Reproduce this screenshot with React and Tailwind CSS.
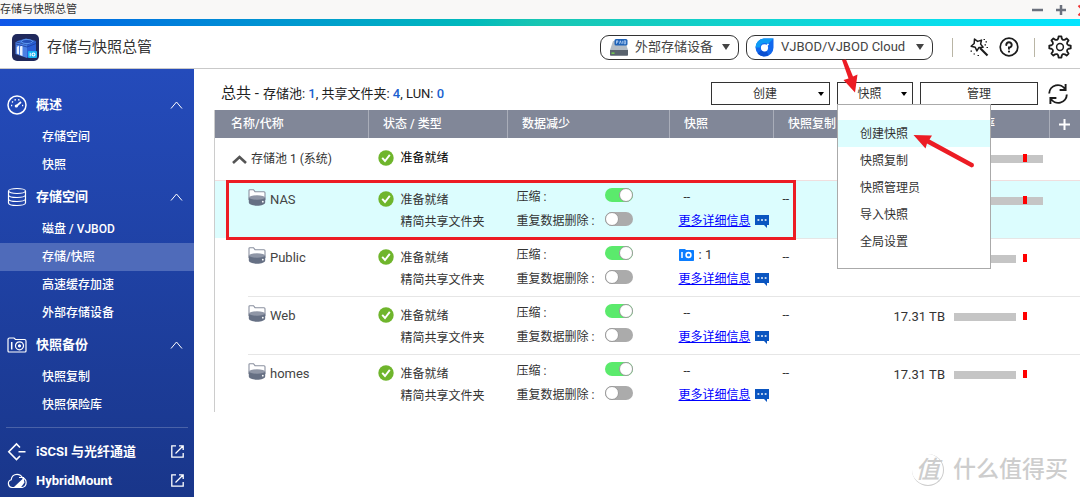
import React from "react";

function AppLogo() {
  return (
    <svg className="size-[27px] shrink-0" viewBox="0 0 27 27" aria-hidden="true">
      <rect width="27" height="27" rx="5" fill="#20295c" />
      <path d="M4 7.500 14 4.500l10 2.500-9 4z" fill="#3b74dc" />
      <ellipse cx="15" cy="7.500" rx="5.500" ry="2" fill="#2450b8" stroke="#6aa5f5" strokeWidth="0.8" />
      <path d="M3.500 8 15 11v13L3.500 20z" fill="#4a80e4" />
      <path d="M4.800 13 7 11.500v9l-2.200-1zM8 12.500l2.500-1V22L8 21z" fill="#e6f0ff" />
      <path d="M15 11l9-4v11l-9 6z" fill="#2a5fd6" />
      <path d="M4 10l11 3M15 13l9-3.500" stroke="#1c3f9e" strokeWidth="0.800" />
      <rect x="16" y="17" width="9" height="7" rx="1" fill="#14b4f5" />
      <path d="M18.200 18.800v3.500" stroke="#fff" strokeWidth="1" />
      <circle cx="21.500" cy="20.500" r="1.500" fill="none" stroke="#fff" strokeWidth="1.100" />
    </svg>
  );
}

function DiskIcon() {
  return (
    <svg className="h-[17px] w-[20px]" viewBox="0 0 20 17" aria-hidden="true">
      <path d="M4 2h12l3 9H1z" fill="#b3bcc5" />
      <path d="M1 11h18v5a.8.8 0 0 1-.8.8H1.800A.8.8 0 0 1 1 16z" fill="#59636e" />
      <rect x="2.500" y="13.500" width="3" height="1.300" fill="#7be04c" />
      <rect x="5.500" y="0" width="13" height="6.500" rx="1.500" fill="#1f63b8" />
      <path d="M7.500 4.800v-3h1.300v1.400H7.600M10.400 4.800l1-3 1 3M13.700 1.800v3M15.200 1.800v3h1.400v-3z" fill="none" stroke="#cfe4ff" strokeWidth="0.700" />
    </svg>
  );
}

function CloudDropIcon() {
  return (
    <svg className="size-[19px]" viewBox="0 0 19 19" aria-hidden="true">
      <path d="M18.500.5v8.700a9 9 0 1 1-9-8.700z" fill="#1268ee" />
      <path d="M9 .5h9.500l-5.800 5.800A4.500 4.500 0 0 0 5 9.500H.5A9 9 0 0 1 9 .5z" fill="#0f9cf5" />
      <path d="M2.500 15.500l4-3.200a4.500 4.500 0 0 0 5 1l2 3.800a9 9 0 0 1-11-1.600z" fill="#0a4fd0" />
      <circle cx="9.500" cy="9.800" r="3.600" fill="#fff" />
      <path d="M9.500 9.800 13.500 6" stroke="#fff" strokeWidth="1.500" />
    </svg>
  );
}

function WandIcon() {
  return (
    <svg className="size-[20px]" viewBox="0 0 20 20" fill="none" stroke="#1c1c1c" strokeWidth="1.500" strokeLinejoin="round" aria-hidden="true">
      <path d="M5.500 2 8.600 4.400l3.900-1.300-.9 4 2.500 3.100-4.100.2-2.100 3.500-1.700-3.700-4.100-1 3.100-2.700z" />
      <path d="M11 11l7.500 7.500" strokeWidth="2.100" />
      <path d="M14.500 2.500H16M16.500 4.800H18M15.500 7.800H17M17.500 10.500H19M1.500 14.200H3M4.500 17H6M8.500 18.500H10" strokeWidth="1.200" />
    </svg>
  );
}

function HelpIcon() {
  return (
    <svg className="size-[20px]" viewBox="0 0 20 20" fill="none" stroke="#1c1c1c" strokeWidth="1.700" strokeLinecap="round" aria-hidden="true">
      <circle cx="10" cy="10" r="8.800" />
      <path d="M7.300 8A2.700 2.700 0 1 1 10 10.600v1.200" strokeWidth="2" />
      <circle cx="10" cy="14.600" r="0.500" fill="#1c1c1c" strokeWidth="1.200" />
    </svg>
  );
}

const gearPath = (() => {
  const teeth = 8;
  const at = (angle, r) => (12 + r * Math.cos(angle)).toFixed(2) + " " + (12 + r * Math.sin(angle)).toFixed(2);
  let d = "";
  for (let i = 0; i < teeth; i++) {
    const a = (i * 2 * Math.PI) / teeth - Math.PI / 2;
    const next = a + Math.PI / teeth;
    d += (i === 0 ? "M" : "L") + at(a - 0.2, 8.8);
    d += "L" + at(a - 0.13, 10.8) + "L" + at(a + 0.13, 10.8) + "L" + at(a + 0.2, 8.8);
    d += "Q" + at(next, 6.9) + " " + at(next + Math.PI / teeth - 0.2, 8.8);
  }
  return d + "Z";
})();

function GearIcon() {
  return (
    <svg className="size-[24px]" viewBox="0 0 24 24" fill="none" stroke="#1c1c1c" strokeWidth="1.800" strokeLinejoin="round" aria-hidden="true">
      <path d={gearPath} />
      <circle cx="12" cy="12" r="3.400" strokeWidth="1.500" />
    </svg>
  );
}

function RefreshIcon() {
  return (
    <svg className="size-[22px]" viewBox="0 0 22 22" fill="none" stroke="#1c1c1c" strokeWidth="1.900" aria-hidden="true">
      <path d="M2.200 10.500A8.600 8.600 0 0 1 18.300 6.500M18.600 1v6h-6" />
      <path d="M19.800 11.500A8.600 8.600 0 0 1 3.700 15.500M3.400 21v-6h6" />
    </svg>
  );
}

function Caret({ small }) {
  return small ? (
    <span className="h-0 w-0 border-x-3 border-t-4 border-x-transparent border-t-black" />
  ) : (
    <span className="h-0 w-0 border-x-4 border-t-6 border-x-transparent border-t-[#444]" />
  );
}

const navIcons = {
  gauge: (
    <>
      <circle cx="10" cy="10" r="9" strokeWidth="1.500" />
      <path d="M9.500 11 14 7" strokeWidth="1.800" />
      <circle cx="9.300" cy="11" r="1" fill="currentColor" />
      <path d="M4 10.500h1.200M5 6.500l1 .8M8 4.200l.4 1.200M12 4.200l-.4 1.200M15 10.500h1.200" strokeWidth="1.500" />
    </>
  ),
  disks: (
    <>
      <ellipse cx="10" cy="4" rx="8.500" ry="2.500" />
      <path d="M1.500 4v12c0 1.400 3.800 2.500 8.500 2.500s8.500-1.100 8.500-2.500V4M1.500 8c0 1.400 3.800 2.500 8.500 2.500s8.500-1.100 8.500-2.500M1.500 12c0 1.400 3.800 2.500 8.500 2.500s8.500-1.100 8.500-2.500" />
    </>
  ),
  camera: (
    <>
      <path d="M1 4.500a1.500 1.500 0 0 1 1.500-1.500H7l1.500 1.500h9A1.500 1.500 0 0 1 19 6v10a1 1 0 0 1-1 1H2a1 1 0 0 1-1-1z" />
      <path d="M4.700 7v7.500" strokeWidth="1.500" />
      <circle cx="12.500" cy="10.800" r="4" />
      <circle cx="12.500" cy="10.800" r="1" fill="currentColor" />
    </>
  ),
  iscsi: (
    <path d="M13 5.500 9.500 2 1.800 9.800l7.700 7.700L13 14M11.500 9.800h7" strokeWidth="1.600" />
  ),
  cloud: (
    <>
      <path d="M5 16.500a4 4 0 0 1-.8-7.800C4.500 5.500 7 3.300 10 3.300c2.500 0 4.500 1.300 5.500 3.500a5 5 0 0 1-.3 9.700z" />
      <path d="M7 16 16 7.500l1.500 4-3.500 4.800z" fill="currentColor" stroke="none" />
      <path d="M12 6.500h4.500V11" />
    </>
  ),
};

function NavIcon({ name }) {
  return (
    <svg className="size-[20px] shrink-0" viewBox="0 0 20 20" fill="none" stroke="currentColor" strokeWidth="1.200" aria-hidden="true">
      {navIcons[name]}
    </svg>
  );
}

const sections = [
  { title: "概述", icon: "gauge", items: ["存储空间", "快照"] },
  { title: "存储空间", icon: "disks", items: ["磁盘 / VJBOD", "存储/快照", "高速缓存加速", "外部存储设备"] },
  { title: "快照备份", icon: "camera", items: ["快照复制", "快照保险库"] },
];

const externalLinks = [
  { title: "iSCSI 与光纤通道", icon: "iscsi" },
  { title: "HybridMount", icon: "cloud" },
];

function Sidebar() {
  return (
    <nav className="w-[194px] shrink-0 bg-linear-to-b from-[#244bbb] to-[#19368a] pt-[18px] text-white">
      {sections.map((section) => (
        <div key={section.title}>
          <button type="button" className="flex h-9 w-full items-center pr-[11px] pl-[7px] text-left text-[13px] font-bold">
            <NavIcon name={section.icon} />
            <span className="ml-[9px] flex-1">{section.title}</span>
            <svg className="h-[8px] w-[13px]" viewBox="0 0 13 8" fill="none" stroke="currentColor" aria-hidden="true">
              <path d="M1 7.500 6.500 1 12 7.500" />
            </svg>
          </button>
          {section.items.map((item) => (
            <a
              key={item}
              href="#"
              className={
                item === "存储/快照"
                  ? "flex h-7 items-center bg-[#4f6bba] pl-[42px] text-[12px] font-medium"
                  : "flex h-7 items-center pl-[42px] text-[12px] font-medium"
              }
            >
              {item}
            </a>
          ))}
        </div>
      ))}
      <div className="mx-[6px] mt-[8px] border-t border-[#4a62a8]" />
      <div className="pt-[9px]">
        {externalLinks.map((link) => (
          <a key={link.title} href="#" className="flex h-[29px] items-center pr-[10px] pl-[7px] text-[13px] font-bold">
            <NavIcon name={link.icon} />
            <span className="ml-[9px] flex-1">{link.title}</span>
            <svg className="size-[13px]" viewBox="0 0 13 13" fill="none" stroke="currentColor" strokeWidth="1.300" aria-hidden="true">
              <path d="M5 .8H.8v11.400h11.400V8M8 .8h4.200V5M12 1 4.500 8.500" />
            </svg>
          </a>
        ))}
      </div>
    </nav>
  );
}

function ReadyIcon() {
  return (
    <svg className="size-[16px] shrink-0" viewBox="0 0 16 16" aria-hidden="true">
      <circle cx="8" cy="8" r="7.700" fill="#6fb52c" />
      <path d="M4.200 7.800 7 11l4.800-6.200" fill="none" stroke="#fff" strokeWidth="1.900" />
    </svg>
  );
}

function FolderIcon() {
  return (
    <svg className="h-[17px] w-[18px] shrink-0" viewBox="0 0 18 17" aria-hidden="true">
      <path d="M1 11V1.500C1 1 1.300.7 1.800.7H5.500l1.500 2h9c.6 0 1 .4 1 1V11" fill="#fff" stroke="#8b91a0" strokeWidth="1.100" />
      <path d="M.8 8.500v5C.8 15.200 4.500 16.700 9 16.700s8.200-1.500 8.200-3.200v-5z" fill="#667084" />
      <ellipse cx="9" cy="8.500" rx="8.200" ry="2.200" fill="#8f96a6" />
      <circle cx="14.800" cy="12.700" r="0.900" fill="#fff" />
    </svg>
  );
}

function ChatIcon() {
  return (
    <svg className="h-[13px] w-[14px]" viewBox="0 0 14 13" aria-hidden="true">
      <path d="M0 0h14v10h-2v3L9 10H0z" fill="#0a55c0" />
      <path d="M2.500 5h1.800M6.100 5h1.800M9.700 5h1.800" stroke="#fff" strokeWidth="1.600" />
    </svg>
  );
}

function SnapshotIcon() {
  return (
    <svg className="h-[12px] w-[15px]" viewBox="0 0 15 12" aria-hidden="true">
      <path d="M0 1C0 .4.4 0 1 0h5l1 1h7c.6 0 1 .4 1 1v9c0 .6-.4 1-1 1H1c-.6 0-1-.4-1-1z" fill="#0b7dff" />
      <path d="M3 3v6" stroke="#fff" strokeWidth="1.500" />
      <circle cx="9.500" cy="6" r="2.400" fill="none" stroke="#fff" strokeWidth="1.600" />
    </svg>
  );
}

function SwitchLine({ id, label, on }) {
  return (
    <div className="flex w-[116px] items-start justify-between">
      <label htmlFor={id}>{label}</label>
      <input
        id={id}
        type="checkbox"
        role="switch"
        defaultChecked={on}
        className="mt-[3px] flex h-[14px] w-[28px] appearance-none items-center rounded-full bg-[#ababab] before:size-[14px] before:rounded-full before:border before:border-[#999] before:bg-white checked:justify-end checked:bg-[#5bea6c]"
      />
    </div>
  );
}

function UsageBar({ full }) {
  return (
    <div className="relative flex h-[22px] w-[89px] items-center">
      <div className={full ? "h-[8px] w-full bg-[#c5c5c5]" : "h-[8px] w-[62px] bg-[#c5c5c5]"} />
      <div className="absolute top-[6px] left-[69px] h-[8px] w-[4px] bg-[#f00]" />
    </div>
  );
}

const folders = [
  { name: "NAS", selected: true, full: true },
  { name: "Public", snapshots: 1 },
  { name: "Web", capacity: "17.31 TB" },
  { name: "homes", capacity: "17.31 TB" },
];

function FolderRow({ folder }) {
  const line = folder.selected ? "h-[58px] border-t border-[#f0dede]" : "h-[58px] border-t border-[#e6e6e6]";
  return (
    <tr className={folder.selected ? "bg-[#dcfdfe] align-top" : "align-top"}>
      <td className={folder.selected ? "" : "pl-[33px]"}>
        <div className={line}>
          <div className={folder.selected ? "flex items-start gap-[4px] pt-[8px] pl-[33px]" : "flex items-start gap-[4px] pt-[8px]"}>
            <FolderIcon />
            <span className="text-[13px] leading-[22px] text-[#444]">{folder.name}</span>
          </div>
        </div>
      </td>
      <td>
        <div className={line}>
          <div className="flex gap-[7px] pt-[8px] pl-[9px] leading-[22px]">
            <span className="flex h-5 items-center"><ReadyIcon /></span>
            <div>
              <div>准备就绪</div>
              <div>精简共享文件夹</div>
            </div>
          </div>
        </div>
      </td>
      <td>
        <div className={line}>
          <div className="pt-[4px] pl-[9px] leading-[24px]">
            <SwitchLine id={folder.name + "-compress"} label="压缩 :" on />
            <SwitchLine id={folder.name + "-dedupe"} label="重复数据删除 :" />
          </div>
        </div>
      </td>
      <td>
        <div className={line}>
          <div className="pt-[4px] pl-[9px] leading-[24px]">
            <div className="flex h-6 items-center gap-[5px]">
              {folder.snapshots ? (
                <>
                  <SnapshotIcon />
                  <span className="text-[13px]">: {folder.snapshots}</span>
                </>
              ) : (
                <span className="pl-[5px]">--</span>
              )}
            </div>
            <div className="flex items-center gap-[4px]">
              <a href="#" className="text-[#00f] underline">更多详细信息</a>
              <ChatIcon />
            </div>
          </div>
        </div>
      </td>
      <td>
        <div className={line}><div className="pt-[7px] pl-[9px] leading-[22px]">--</div></div>
      </td>
      <td>
        <div className={line}><div className="pt-[9px] pl-[13px] text-[13px] leading-[22px] whitespace-nowrap">{folder.capacity}</div></div>
      </td>
      <td colSpan={2}>
        <div className={line}><div className="pt-[9px] pl-[13px]"><UsageBar full={folder.full} /></div></div>
      </td>
    </tr>
  );
}

function StorageTable() {
  const th = "border-r border-[#a9adb9] pl-[14px] text-left font-medium";
  return (
    <table className="w-full table-fixed border-collapse border-l border-[#ccc] text-[12px] text-[#333]">
      <colgroup>
        <col className="w-[154px]" />
        <col className="w-[139px]" />
        <col className="w-[162px]" />
        <col className="w-[104px]" />
        <col className="w-[107px]" />
        <col className="w-[60px]" />
        <col />
        <col className="w-[31px]" />
      </colgroup>
      <thead>
        <tr className="h-[28px] bg-[#818798] text-white">
          <th className="border-r border-[#a9adb9] pl-[16px] text-left font-medium">名称/代称</th>
          <th className={th}>状态 / 类型</th>
          <th className={th}>数据减少</th>
          <th className={th}>快照</th>
          <th className={th}>快照复制</th>
          <th className={th}></th>
          <th className="border-r border-[#a9adb9] pl-[18px] text-left font-medium">使用率</th>
          <th>
            <button type="button" aria-label="+" className="flex w-full items-center justify-center">
              <svg className="size-[11px]" viewBox="0 0 11 11" stroke="#fff" strokeWidth="2" aria-hidden="true"><path d="M5.500 0v11M0 5.500h11" /></svg>
            </button>
          </th>
        </tr>
      </thead>
      <tbody>
        <tr className="h-[42px]">
          <td>
            <div className="flex items-center gap-[4px] pl-[17px]">
              <svg className="h-[9px] w-[15px]" viewBox="0 0 15 9" fill="none" stroke="#555" strokeWidth="2.600" aria-hidden="true"><path d="M1 8 7.500 2 14 8" /></svg>
              <span className="text-[12px]">存储池 1 (系统)</span>
            </div>
          </td>
          <td>
            <div className="flex items-center gap-[7px] pb-[2px] pl-[9px] text-black"><ReadyIcon />准备就绪</div>
          </td>
          <td colSpan={4}></td>
          <td colSpan={2}><div className="pl-[13px]"><UsageBar full /></div></td>
        </tr>
        {folders.map((folder) => <FolderRow key={folder.name} folder={folder} />)}
      </tbody>
    </table>
  );
}

const menuItems = ["创建快照", "快照复制", "快照管理员", "导入快照", "全局设置"];

function Toolbar() {
  const button = "flex h-[23px] items-center border border-[#333] bg-white text-[12px] text-[#333]";
  return (
    <div className="flex items-center pt-[13px] pr-[11px] pb-[5px] pl-[7px]">
      <p className="flex flex-1 items-baseline gap-[4px] text-[#222]">
        <span className="text-[15px]">总共 -</span>
        <span className="text-[13px]">
          存储池: <b className="font-medium text-[#1a5fd0]">1</b>, 共享文件夹: <b className="font-medium text-[#1a5fd0]">4</b>, LUN: <b className="font-medium text-[#1a5fd0]">0</b>
        </span>
      </p>
      <div className="flex items-center gap-[7px]">
        <button type="button" className={button + " w-[119px] pr-[5px]"}><span className="flex-1 text-center">创建</span><Caret small /></button>
        <div className="relative">
          <button type="button" aria-haspopup="menu" aria-expanded="true" className={button + " w-[76px] pr-[5px]"}><span className="flex-1 text-center">快照</span><Caret small /></button>
          <div role="menu" className="absolute top-[22px] left-0 z-10 w-[154px] border border-[#aaa] bg-white pt-[15px] pb-[13px]">
            {menuItems.map((item, i) => (
              <button
                key={item}
                type="button"
                role="menuitem"
                className={i === 0 ? "flex h-[27px] w-full items-center bg-[#dcfdfe] pl-[22px] text-[12px] text-[#333]" : "flex h-[27px] w-full items-center pl-[22px] text-[12px] text-[#333]"}
              >
                {item}
              </button>
            ))}
          </div>
        </div>
        <button type="button" className={button + " w-[118px] justify-center"}>管理</button>
      </div>
      <button type="button" aria-label="刷新" className="ml-[9px]"><RefreshIcon /></button>
    </div>
  );
}

function Header() {
  const pill = "flex h-[25px] items-center rounded-[9px] border border-[#333] px-[8px] text-[13px] text-[#444]";
  return (
    <header className="flex h-[43px] items-center border-b border-[#c9c9c9] bg-white pr-[8px] pl-[12px]">
      <AppLogo />
      <h1 className="ml-[8px] flex-1 text-[15px] text-[#333]">存储与快照总管</h1>
      <button type="button" className={pill + " w-[139px]"}><DiskIcon /><span className="ml-[6px] flex-1 text-left">外部存储设备</span><Caret /></button>
      <button type="button" className={pill + " ml-[7px] w-[187px]"}><CloudDropIcon /><span className="ml-[7px] flex-1 text-left">VJBOD/VJBOD Cloud</span><Caret /></button>
      <span className="ml-[19px] h-[19px] w-px bg-[#b9b5a5]" />
      <button type="button" aria-label="向导" className="ml-[16px]"><WandIcon /></button>
      <button type="button" aria-label="帮助" className="ml-[10px]"><HelpIcon /></button>
      <span className="ml-[15px] h-[19px] w-px bg-[#b9b5a5]" />
      <button type="button" aria-label="设置" className="ml-[13px]"><GearIcon /></button>
    </header>
  );
}

function TitleBar() {
  return (
    <div className="flex h-[19px] items-center justify-between overflow-hidden bg-[#f9f8f7] text-[11px] leading-[19px] text-[#333]">
      <span>存储与快照总管</span>
      <svg className="h-[12px] w-[48px]" viewBox="0 0 48 12" stroke="#6b707c" strokeWidth="2.500" aria-hidden="true">
        <path d="M0 6h11M24 6h10M29 1v10" />
        <path d="M46.500 1.500 49 4M46.500 11.500 49 9" stroke="#e33" strokeWidth="2" />
      </svg>
    </div>
  );
}

function Annotations() {
  return (
    <div className="pointer-events-none absolute inset-0 z-20 overflow-hidden">
      <div className="absolute top-[180px] left-[226px] h-[60px] w-[570px] border-3 border-[#ec1c24]" />
      <svg className="absolute top-[58px] left-[837px] h-[110px] w-[140px]" viewBox="837 58 140 110" fill="#ec1c24" aria-hidden="true">
        <path d="M842 60 846 59.500 853 76.500 857.500 74.500 855 92.500 843.500 80 848.500 78.500z" />
        <path d="M913.500 135 932 135.500 929.500 139.500 973.500 163.500Q975 167 971.500 167.500L927 143.500 925.500 148.500z" />
      </svg>
      <div className="absolute top-[454px] left-[912px] flex items-center font-medium text-[#cdcdcd]">
        <span className="flex size-[32px] items-center justify-center rounded-full border-r border-b border-[#cdcdcd] text-[24px] italic">值</span>
        <span className="ml-[9px] text-[23px] leading-[32px]">什么值得买</span>
      </div>
    </div>
  );
}

export default function App() {
  return (
    <div className="relative flex min-h-screen flex-col overflow-hidden bg-white font-['Roboto','Noto_Sans_CJK_SC',sans-serif]">
      <TitleBar />
      <div className="h-[7px] bg-linear-to-r from-[#1155e8] via-[#18c6b2] to-[#04e5ff]" />
      <Header />
      <div className="flex flex-1">
        <Sidebar />
        <main className="min-w-0 flex-1 pl-[20px]">
          <Toolbar />
          <StorageTable />
        </main>
      </div>
      <Annotations />
    </div>
  );
}
